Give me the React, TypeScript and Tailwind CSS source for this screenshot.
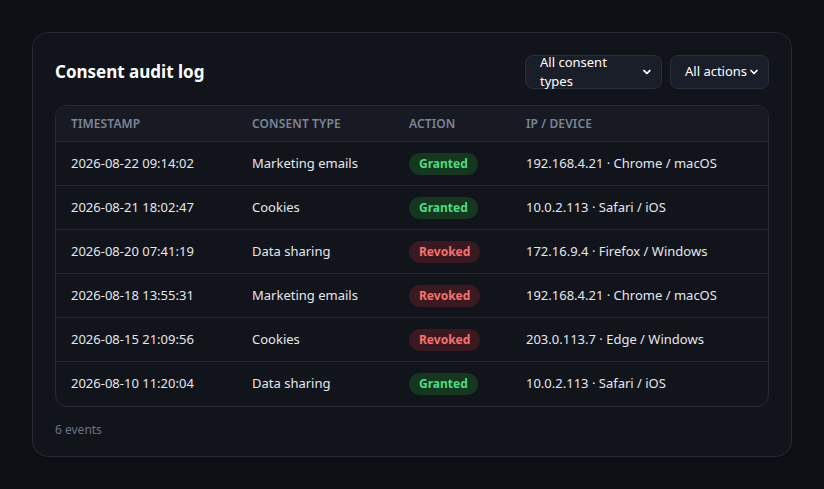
import React from 'react';

const rows = [
  ['2026-08-22 09:14:02', 'Marketing emails', true, '192.168.4.21 · Chrome / macOS'],
  ['2026-08-21 18:02:47', 'Cookies', true, '10.0.2.113 · Safari / iOS'],
  ['2026-08-20 07:41:19', 'Data sharing', false, '172.16.9.4 · Firefox / Windows'],
  ['2026-08-18 13:55:31', 'Marketing emails', false, '192.168.4.21 · Chrome / macOS'],
  ['2026-08-15 21:09:56', 'Cookies', false, '203.0.113.7 · Edge / Windows'],
  ['2026-08-10 11:20:04', 'Data sharing', true, '10.0.2.113 · Safari / iOS'],
] as const;

const Chevron = () => (
  <svg width="12" height="12" viewBox="0 0 24 24" fill="none" stroke="currentColor" strokeWidth="3.5" strokeLinecap="round" strokeLinejoin="round">
    <path d="M6 9l6 6 6-6" />
  </svg>
);

const Select = ({ label, w }: { label: string; w: string }) => (
  <div className={`${w} h-[34px] flex items-center justify-between pl-[14px] pr-[8px] rounded-lg border border-[#2a2f3c] bg-[#1a1e29] text-white text-[13px] font-['Liberation_Sans',sans-serif]`}>
    <span>{label}</span>
    <Chevron />
  </div>
);

export default function App() {
  return (
    <div className="min-h-[489px] bg-[#0d0f14] p-8 font-['Lato',sans-serif]">
      <div className="w-[760px] h-[425px] rounded-2xl border border-[#262a36] bg-[#12141b] px-[22px] pt-[22px]">
        <div className="flex items-center justify-between">
          <h2 className="text-white font-bold text-[17px]">Consent audit log</h2>
          <div className="flex gap-2">
            <Select label="All consent types" w="w-[137px]" />
            <Select label="All actions" w="w-[99px]" />
          </div>
        </div>
        <div className="mt-[16px] rounded-xl border border-[#262a36] overflow-hidden">
          <div className="flex h-[36px] items-center bg-[#171a23] border-b border-[#262a36] text-[12px] font-semibold text-[#7c8597] uppercase tracking-[0.01em]">
            <div className="w-[196px] pl-[15px]">Timestamp</div>
            <div className="w-[157px]">Consent type</div>
            <div className="w-[117px]">Action</div>
            <div>IP / Device</div>
          </div>
          {rows.map((r, i) => (
            <div key={i} className={`flex h-[44px] items-center text-[13px] text-[#e3e7ee] ${i < rows.length - 1 ? 'border-b border-[#232733]' : ''}`}>
              <div className="w-[196px] pl-[15px]">{r[0]}</div>
              <div className="w-[157px]">{r[1]}</div>
              <div className="w-[117px]">
                {r[2] ? (
                  <span className="inline-block rounded-full bg-[#15361f] text-[#4ade80] text-[12px] font-bold px-[10px] py-[2px]">Granted</span>
                ) : (
                  <span className="inline-block rounded-full bg-[#3a1a20] text-[#f87171] text-[12px] font-bold px-[10px] py-[2px]">Revoked</span>
                )}
              </div>
              <div>{r[3]}</div>
            </div>
          ))}
        </div>
        <div className="mt-[14px] text-[12px] text-[#6b7280]">6 events</div>
      </div>
    </div>
  );
}
